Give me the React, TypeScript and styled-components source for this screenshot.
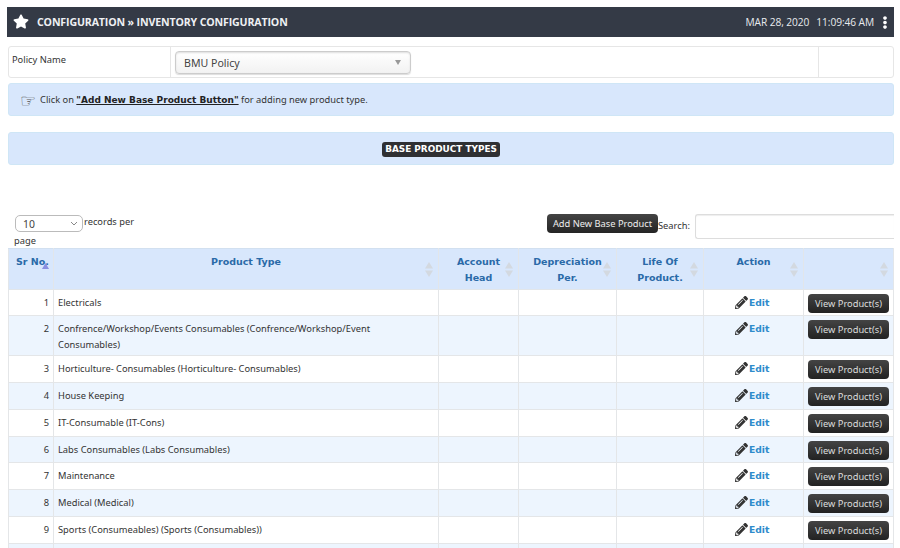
import React from "react";
import styled, { createGlobalStyle } from "styled-components";
import { FaStar, FaPencilAlt, FaEllipsisV } from "react-icons/fa";

const Global = createGlobalStyle`
  html, body { margin: 0; padding: 0; background: #fff; overflow: hidden; }
  body { font-family: "Noto Sans", "DejaVu Sans", sans-serif; width: 900px; height: 548px; }
`;
const Page = styled.div`
  position: relative; width: 900px; height: 548px; overflow: hidden; color: #333;
  font-size: 9.3px;
`;
const Header = styled.header`
  position: absolute; left: 7px; top: 7px; width: 887px; height: 30px;
  background: #343a46; color: #fff; display: flex; align-items: center;
`;
const Star = styled(FaStar)`margin-left: 6px; width: 16px; height: 15px; flex: none; transform: translateY(-1px);`;
const Title = styled.div`
  margin-left: 8px; font-family: "Open Sans", sans-serif; font-weight: 700; font-size: 10.6px; letter-spacing: -0.14px; color: #eef0f3;
`;
const Clock = styled.div`
  margin-left: auto; font-family: "Open Sans", sans-serif; font-size: 10.2px; color: #e8eaee; display: flex; gap: 7px; white-space: nowrap; letter-spacing: -.08px;
`;
const Dots = styled(FaEllipsisV)`margin: 0 5px 0 7px; width: 8px; height: 13px; color: #fff; flex: none;`;
const Policy = styled.div`
  position: absolute; left: 8px; top: 46px; width: 886px; height: 32px; box-sizing: border-box;
  border: 1px solid #e6e6e6; border-radius: 3px; display: grid; grid-template-columns: 162px 648px 1fr;
`;
const PolicyCell = styled.div`
  border-right: 1px solid #e6e6e6; position: relative; padding: 6px 0 0 3px; color: #333;
  &:last-child { border-right: 0; }
`;
const PolicySelect = styled.div`
  position: absolute; left: 4px; top: 4px; width: 236px; height: 23px; box-sizing: border-box;
  border: 1px solid #ccc; border-radius: 4px; box-shadow: inset 0 1px 2px #ddd, 0 1px 1px #ddd;
  background: linear-gradient(#fff, #f2f2f2); display: flex; align-items: center; padding-left: 8px; font-size: 10.6px; color: #444;
`;
const Caret = styled.span`
  position: absolute; right: 9px; top: 8px; width: 0; height: 0;
  border-left: 3px solid transparent; border-right: 3px solid transparent; border-top: 5px solid #999;
`;
const Band = styled.div<{ $top: number }>`
  position: absolute; left: 8px; top: ${p => p.$top}px; width: 886px; height: 33px; box-sizing: border-box;
  background: #d8e7fc; border: 1px solid #cfe6f6; border-radius: 3px; display: flex; align-items: center;
`;
const Hand = styled.span`margin-left: 11px; width: 20px; font-family: "DejaVu Sans", sans-serif; font-size: 18px; color: #555; flex: none; line-height: 16px; transform: translateY(1px);`;
const Hint = styled.span`color: #333;`;
const HintLink = styled.b`text-decoration: underline; color: #222; font-family: "DejaVu Sans", sans-serif; font-size: 9px;`;
const Badge = styled.span`
  margin: 0 auto; transform: translate(-10px, 1px); background: #2f3033; color: #fff; font-family: "DejaVu Sans", sans-serif; font-weight: 700; font-size: 8.9px;
  padding: 0 3px; height: 15px; line-height: 15px; border-radius: 3px; white-space: nowrap;
`;
const LenSelect = styled.div`
  position: absolute; left: 15px; top: 215px; width: 68px; height: 17px; box-sizing: border-box;
  border: 1px solid #bbb; border-radius: 5px; padding-left: 7px; line-height: 16px; font-size: 10.4px; color: #444;
`;
const Chevron = styled.svg`position: absolute; right: 4px; top: 5px; width: 8px; height: 6px;`;
const LenText = styled.div`position: absolute; left: 84px; top: 215px; line-height: 14px;`;
const LenPage = styled.div`position: absolute; left: 14px; top: 234px; line-height: 14px;`;
const AddButton = styled.div`
  position: absolute; left: 547px; top: 214px; width: 111px; height: 19px; border-radius: 4px;
  background: linear-gradient(#444, #242424); color: #eee; text-align: center; line-height: 19px; white-space: nowrap; font-size: 9.3px;
`;
const SearchLabel = styled.div`position: absolute; left: 658px; top: 219px; line-height: 14px;`;
const SearchInput = styled.div`
  position: absolute; left: 695px; top: 214px; width: 199px; height: 25px; box-sizing: border-box;
  border: 1px solid #ddd; border-right: 0; border-radius: 3px 0 0 3px; background: #fff; box-shadow: inset 0 1px 1px #eee;
`;
const Table = styled.table`
  position: absolute; left: 8px; top: 248px; width: 885px; border-collapse: collapse; table-layout: fixed;
`;
const Th = styled.th<{ $w: number }>`
  width: ${p => p.$w}px; height: 40.5px; box-sizing: border-box; padding: 5px 4px 0 4px; vertical-align: top;
  background: #d8e7fc; color: #2a6aa8; font-family: "DejaVu Sans", sans-serif; font-size: 9.5px; line-height: 16px; font-weight: 700;
  border: 1px solid #e2e6ea; border-top: 1px solid #d2e0f0; position: relative; text-align: center;
`;
const ThLabel = styled.span<{ $nowrap: boolean }>`
  display: inline-block; white-space: ${p => (p.$nowrap ? "nowrap" : "normal")}; max-width: 72px;
  ${p => (p.$nowrap ? "max-width: none; transform: translateX(1.5px);" : "")}
`;
const WideLabel = styled.span`display: inline-block;`;
const SortIcon = styled.svg`position: absolute; right: 5px; top: 13px; width: 8px; height: 15px;`;
const SortUp = styled.svg`position: absolute; right: 4px; top: 14px; width: 7px; height: 6px;`;
const Tr = styled.tr<{ $alt: boolean; $h: number }>`
  height: ${p => p.$h}px; background: ${p => (p.$alt ? "#edf5fe" : "#fff")};
`;
const Td = styled.td<{ $right?: boolean }>`
  box-sizing: border-box; border: 1px solid #e4e6e8; padding: 5px 4px 0; vertical-align: top; line-height: 16px;
  text-align: ${p => (p.$right ? "right" : "left")}; color: #333; overflow: hidden;
`;
const ActionCell = styled(Td)`padding: 5px 0 0 31px; white-space: nowrap;`;
const Pencil = styled(FaPencilAlt)`width: 13px; height: 13px; color: #333; vertical-align: -3px; margin-right: 1px;`;
const EditLink = styled.span`font-family: "DejaVu Sans", sans-serif; font-weight: 700; color: #2e8bcb; font-size: 9.2px;`;
const ViewCell = styled(Td)`padding: 4px 0 0 4px;`;
const ViewButton = styled.div`
  width: 81px; height: 19px; border-radius: 4px; background: linear-gradient(#444, #222); color: #ddd;
  text-align: center; line-height: 19px; white-space: nowrap; font-size: 9.3px;
`;

const rows: [string, number][] = [
  ["Electricals", 26.75],
  ["Confrence/Workshop/Events Consumables (Confrence/Workshop/Event Consumables)", 40.2],
  ["Horticulture- Consumables (Horticulture- Consumables)", 26.75],
  ["House Keeping", 26.75],
  ["IT-Consumable (IT-Cons)", 26.75],
  ["Labs Consumables (Labs Consumables)", 26.75],
  ["Maintenance", 26.75],
  ["Medical (Medical)", 26.75],
  ["Sports (Consumeables) (Sports (Consumables))", 26.75],
  ["", 26.75],
];
const cols: [string, number][] = [
  ["Sr No.", 45], ["Product Type", 385], ["Account Head", 80], ["Depreciation Per.", 98],
  ["Life Of Product.", 87], ["Action", 100], ["", 90],
];

const Sort = () => (
  <SortIcon viewBox="0 0 8 15">
    <path d="M4 0L8 6.5H0z M4 15L0 8.5H8z" fill="#d3d9e0" />
  </SortIcon>
);

export default function App() {
  return (
    <Page>
      <Global />
      <Header>
        <Star />
        <Title>CONFIGURATION » INVENTORY CONFIGURATION</Title>
        <Clock><span>MAR 28, 2020</span><span>11:09:46 AM</span></Clock>
        <Dots />
      </Header>
      <Policy>
        <PolicyCell>Policy Name</PolicyCell>
        <PolicyCell><PolicySelect>BMU Policy<Caret /></PolicySelect></PolicyCell>
        <PolicyCell />
      </Policy>
      <Band $top={83}>
        <Hand>☞</Hand>
        <Hint>Click on <HintLink>"Add New Base Product Button"</HintLink> for adding new product type.</Hint>
      </Band>
      <Band $top={132}><Badge>BASE PRODUCT TYPES</Badge></Band>
      <LenSelect>10
        <Chevron viewBox="0 0 8 6"><path d="M1 1l3 3 3-3" fill="none" stroke="#888" /></Chevron>
      </LenSelect>
      <LenText>records per</LenText>
      <LenPage>page</LenPage>
      <AddButton>Add New Base Product</AddButton>
      <SearchLabel>Search:</SearchLabel>
      <SearchInput />
      <Table>
        <thead>
          <tr>
            {cols.map(([t, w], i) => (
              <Th key={i} $w={w}>
                {i === 1 ? <WideLabel>{t}</WideLabel> : <ThLabel $nowrap={i === 0}>{t}</ThLabel>}
                {i === 0 ? (
                  <SortUp viewBox="0 0 7 6"><path d="M3.5 0L7 6H0z" fill="#8a8fe0" /></SortUp>
                ) : (
                  <Sort />
                )}
              </Th>
            ))}
          </tr>
        </thead>
        <tbody>
          {rows.map(([name, h], i) => (
            <Tr key={i} $alt={i % 2 === 1} $h={h}>
              <Td $right>{name ? i + 1 : ""}</Td>
              <Td>{name}</Td>
              <Td /><Td /><Td />
              <ActionCell>{name && <><Pencil /><EditLink>Edit</EditLink></>}</ActionCell>
              <ViewCell>{name && <ViewButton>View Product(s)</ViewButton>}</ViewCell>
            </Tr>
          ))}
        </tbody>
      </Table>
    </Page>
  );
}
